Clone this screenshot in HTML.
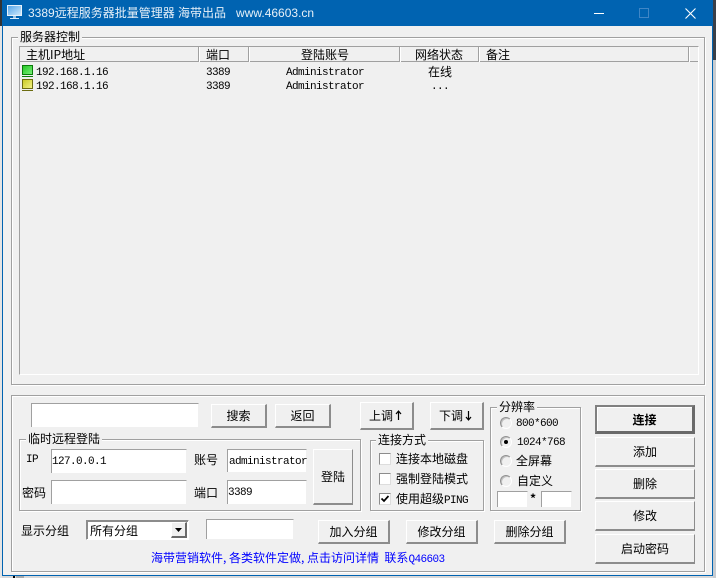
<!DOCTYPE html>
<html><head><meta charset="utf-8"><style>
html,body{margin:0;padding:0}
body{width:716px;height:578px;overflow:hidden;position:relative;background:#d9d9d9;font:12px/14px "WenQuanYi Zen Hei","Noto Sans CJK SC",sans-serif;color:#000}
div,span{position:absolute;box-sizing:border-box}
.t{white-space:nowrap;line-height:14px;height:14px}
.m{font-family:"Liberation Mono",monospace;font-size:11px;letter-spacing:-.6px}
.c{text-align:center}
.g{border:1px solid #a0a0a0;box-shadow:1px 1px 0 #fff,inset 1px 1px 0 #fff}
.l{background:#f0f0f0;padding:0 2px;white-space:nowrap;line-height:14px;height:14px}
.i{background:#fff;border-top:1px solid #a0a0a0;border-left:1px solid #a0a0a0;border-right:1px solid #f0f0f0}
.b{background:#f0f0f0;border-top:1px solid #fff;border-left:1px solid #fff;border-right:2px solid #8c8c8c;border-bottom:2px solid #8c8c8c;text-align:center;white-space:nowrap;outline:0}
.h{top:47px;height:15px;border-right:1px solid #a0a0a0;border-bottom:1px solid #a0a0a0;box-shadow:1px 0 0 #fff}
.r{width:12px;height:12px;border-radius:50%;background:#f0f0f0;border:1px solid #fff;border-top-color:#909090;border-left-color:#909090;box-shadow:inset 1px 1px 0 #c0c0c0}
.k{width:12px;height:12px;background:#fff;border:1px solid #8c8c8c;border-right-color:#ddd;border-bottom-color:#ddd}
</style></head><body>
<div style="left:0;top:0;width:2px;height:578px;background:#e4e4e4"></div>
<div style="left:0;top:0;width:2px;height:26px;background:#333"></div>
<div style="left:713px;top:0;width:3px;height:578px;background:#c8ccd0"></div>
<div style="left:713px;top:0;width:3px;height:60px;background:#3a3f48"></div>
<div style="left:13px;top:576px;width:2px;height:2px;background:#000"></div>
<div style="left:16px;top:576px;width:8px;height:2px;background:#aaa"></div>

<div style="left:2px;top:0;width:711px;height:576px;background:#f0f0f0;border:1px solid #0063b1;border-left-width:1px;border-right-width:1px"></div>
<div style="left:2px;top:0;width:711px;height:26px;background:#0063b1"></div>

<svg style="position:absolute;left:7px;top:5px" width="16" height="15" viewBox="0 0 16 15">
<defs><linearGradient id="a" x1="0" y1="0" x2="1" y2="1"><stop offset="0" stop-color="#4fa3ea"/><stop offset="1" stop-color="#d5ecfb"/></linearGradient></defs>
<rect x=".5" y=".5" width="14" height="10" fill="url(#a)" stroke="#e8f2fa"/>
<rect x="6" y="11" width="3" height="2" fill="#9cc4e4"/><rect x="3" y="13" width="9" height="1" fill="#dfeefa"/></svg>
<div class="t" style="left:28px;top:6px;color:#e6f0f8;font:12px/14px 'Liberation Sans','Noto Sans CJK SC',sans-serif;white-space:pre;letter-spacing:0">3389远程服务器批量管理器 海带出品&nbsp;&nbsp;&nbsp;www.46603.cn</div>
<div style="left:594px;top:13px;width:10px;height:1px;background:#fff"></div>
<div style="left:639px;top:8px;width:10px;height:10px;border:1px solid #3f86c6"></div>
<svg style="position:absolute;left:685px;top:8px" width="11" height="11" viewBox="0 0 11 11"><path d="M.5.5l10 10M10.5.5l-10 10" stroke="#fff" stroke-width="1.1" fill="none"/></svg>

<!-- group 1 -->
<div class="g" style="left:11px;top:37px;width:694px;height:348px"></div>
<div class="l" style="left:18px;top:30px">服务器控制</div>
<div style="left:19px;top:46px;width:680px;height:329px;background:#f0f0f0;border:1px solid #a0a0a0;border-right-color:#fff;border-bottom-color:#fff"></div>
<div style="left:20px;top:47px;width:678px;height:15px;border-bottom:1px solid #a0a0a0"></div>
<div class="h" style="left:20px;width:179px"></div>
<div class="h" style="left:200px;width:49px"></div>
<div class="h" style="left:250px;width:150px"></div>
<div class="h" style="left:401px;width:78px"></div>
<div class="h" style="left:480px;width:209px"></div>
<div class="t" style="left:26px;top:48px">主机IP地址</div>
<div class="t" style="left:206px;top:48px">端口</div>
<div class="t c" style="left:250px;width:150px;top:48px">登陆账号</div>
<div class="t c" style="left:400px;width:78px;top:48px">网络状态</div>
<div class="t" style="left:486px;top:48px">备注</div>

<svg style="position:absolute;left:22px;top:65px" width="12" height="14" viewBox="0 0 12 14"><defs><linearGradient id="gg" x1="0" y1="0" x2="1" y2="1"><stop offset="0" stop-color="#1fc41f"/><stop offset="1" stop-color="#7cf07c"/></linearGradient></defs><rect x=".5" y=".5" width="10" height="9" fill="url(#gg)" stroke="#0a7a0a"/><path d="M0 11.500h11" stroke="#0a7a0a"/></svg>
<svg style="position:absolute;left:22px;top:79px" width="12" height="14" viewBox="0 0 12 14"><defs><linearGradient id="yy" x1="0" y1="0" x2="1" y2="1"><stop offset="0" stop-color="#c8c820"/><stop offset="1" stop-color="#f4f48c"/></linearGradient></defs><rect x=".5" y=".5" width="10" height="9" fill="url(#yy)" stroke="#6c6c10"/><path d="M0 11.500h11" stroke="#6c6c10"/></svg>
<div class="t m" style="left:36px;top:66px">192.168.1.16</div>
<div class="t m" style="left:36px;top:80px">192.168.1.16</div>
<div class="t m" style="left:206px;top:66px">3389</div>
<div class="t m" style="left:206px;top:80px">3389</div>
<div class="t m" style="left:286px;top:66px">Administrator</div>
<div class="t m" style="left:286px;top:80px">Administrator</div>
<div class="t" style="left:428px;top:65px">在线</div>
<div class="t m" style="left:431px;top:80px">...</div>

<!-- group 2 -->
<div class="g" style="left:11px;top:395px;width:694px;height:177px"></div>
<div class="i" style="left:31px;top:403px;width:168px;height:24px"></div>
<div class="b" style="left:211px;top:404px;width:56px;height:24px;line-height:21px">搜索</div>
<div class="b" style="left:275px;top:404px;width:56px;height:24px;line-height:21px">返回</div>
<div class="b" style="left:360px;top:402px;width:54px;height:28px;line-height:25px;text-align:left;padding-left:8px">上调</div>
<svg style="position:absolute;left:395px;top:410px" width="7" height="11" viewBox="0 0 7 11"><path d="M3.500 1v9M1 4l2.500-3L6 4" stroke="#000" stroke-width="1.200" fill="none"/></svg>
<div class="b" style="left:430px;top:402px;width:54px;height:28px;line-height:25px;text-align:left;padding-left:8px">下调</div>
<svg style="position:absolute;left:465px;top:410px" width="7" height="11" viewBox="0 0 7 11"><path d="M3.500 1v9M1 7l2.500 3L6 7" stroke="#000" stroke-width="1.200" fill="none"/></svg>

<div class="g" style="left:19px;top:439px;width:342px;height:72px"></div>
<div class="l" style="left:26px;top:432px">临时远程登陆</div>
<div class="t m" style="left:26px;top:453px">IP</div>
<div class="t" style="left:22px;top:486px">密码</div>
<div class="t" style="left:194px;top:453px">账号</div>
<div class="t" style="left:194px;top:486px">端口</div>
<div class="i" style="left:51px;top:449px;width:136px;height:24px"></div>
<div class="i" style="left:51px;top:480px;width:136px;height:24px"></div>
<div class="i" style="left:227px;top:449px;width:80px;height:23px"></div>
<div class="i" style="left:227px;top:480px;width:80px;height:24px"></div>
<div class="t m" style="left:52px;top:455px">127.0.0.1</div>
<div class="t m" style="left:229px;top:455px">administrator</div>
<div class="t m" style="left:228px;top:486px">3389</div>
<div class="b" style="left:313px;top:449px;width:40px;height:56px;line-height:53px;border-right-width:1px;border-bottom-width:2px;box-shadow:none">登陆</div>

<div class="g" style="left:370px;top:440px;width:114px;height:71px"></div>
<div class="l" style="left:376px;top:433px">连接方式</div>
<div class="k" style="left:379px;top:453px"></div>
<div class="k" style="left:379px;top:473px"></div>
<div class="k" style="left:379px;top:493px"></div>
<svg style="position:absolute;left:380px;top:494px" width="10" height="10" viewBox="0 0 10 10"><path d="M1.500 4.500l2.500 2.500 4.500-5" stroke="#000" stroke-width="1.700" fill="none"/></svg>
<div class="t" style="left:396px;top:452px">连接本地磁盘</div>
<div class="t" style="left:396px;top:472px">强制登陆模式</div>
<div class="t" style="left:396px;top:492px">使用超级<span class="m" style="position:static">PING</span></div>

<div class="g" style="left:490px;top:407px;width:91px;height:104px"></div>
<div class="l" style="left:497px;top:400px">分辨率</div>
<div class="r" style="left:500px;top:417px"></div>
<div class="r" style="left:500px;top:436px"></div>
<div style="left:504px;top:440px;width:4px;height:4px;border-radius:50%;background:#000"></div>
<div class="r" style="left:500px;top:455px"></div>
<div class="r" style="left:500px;top:475px"></div>
<div class="t m" style="left:516px;top:417px">800*600</div>
<div class="t m" style="left:517px;top:436px">1024*768</div>
<div class="t" style="left:516px;top:454px">全屏幕</div>
<div class="t" style="left:517px;top:474px">自定义</div>
<div class="i" style="left:497px;top:491px;width:31px;height:16px"></div>
<div class="i" style="left:541px;top:491px;width:31px;height:16px"></div>
<div class="t" style="left:530px;top:492px;font-weight:bold">*</div>

<div class="b" style="left:595px;top:405px;width:100px;height:29px;line-height:26px;font-weight:bold;border:2px solid #6a6a6a;border-bottom-width:3px;border-right-width:3px;border-top-color:#808080;border-left-color:#808080;box-shadow:inset 1px 1px 0 #fff">连接</div>
<div class="b" style="left:595px;top:437px;width:100px;height:30px;line-height:27px;border-right-width:1px">添加</div>
<div class="b" style="left:595px;top:469px;width:100px;height:30px;line-height:27px;border-right-width:1px">删除</div>
<div class="b" style="left:595px;top:501px;width:100px;height:30px;line-height:27px;border-right-width:1px">修改</div>
<div class="b" style="left:595px;top:534px;width:100px;height:30px;line-height:27px;border-right-width:1px">启动密码</div>

<div class="t" style="left:21px;top:524px">显示分组</div>
<div style="left:86px;top:520px;width:103px;height:20px;background:#fff;border:1px solid #8c8c8c;border-right-color:#fff;border-bottom-color:#fff;box-shadow:inset 1px 1px 0 #8c8c8c"></div>
<div class="t" style="left:90px;top:524px">所有分组</div>
<div style="left:171px;top:522px;width:16px;height:16px;background:#f0f0f0;border-right:2px solid #6a6a6a;border-bottom:2px solid #6a6a6a;border-top:1px solid #fff;border-left:1px solid #fff"></div>
<svg style="position:absolute;left:174px;top:527px" width="10" height="6" viewBox="0 0 10 6"><path d="M1 1h7l-3.500 4z" fill="#000"/></svg>
<div class="i" style="left:206px;top:519px;width:88px;height:20px"></div>
<div class="b" style="left:318px;top:520px;width:72px;height:24px;line-height:21px">加入分组</div>
<div class="b" style="left:406px;top:520px;width:72px;height:24px;line-height:21px">修改分组</div>
<div class="b" style="left:494px;top:520px;width:72px;height:24px;line-height:21px">删除分组</div>
<div class="t" style="left:151px;top:551px;color:#0000ff;white-space:pre">海带营销软件, 各类软件定做, 点击访问详情  联系<span class="m" style="position:static">Q46603</span></div>
</body></html>
